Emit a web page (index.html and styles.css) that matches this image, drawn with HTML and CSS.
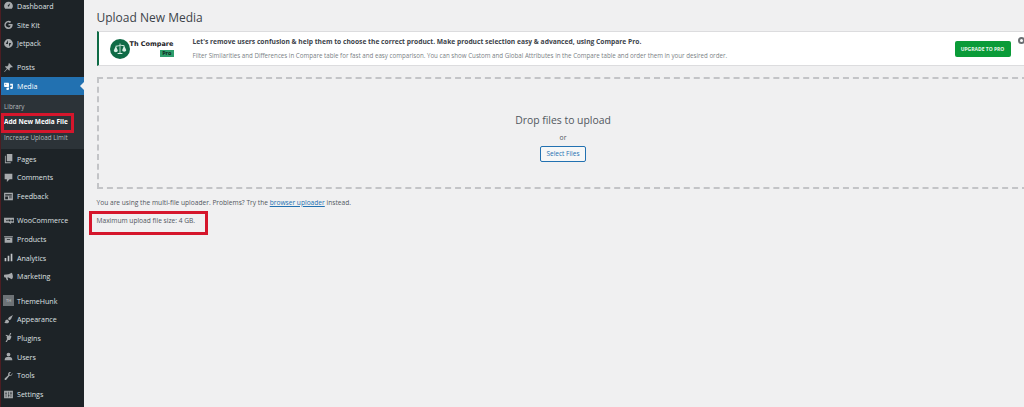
FILE: index.html
```html
<!DOCTYPE html>
<html lang="en">
<head>
<meta charset="utf-8">
<title>Upload New Media</title>
<link rel="stylesheet" href="styles.css">
</head>
<body>
<div class="app">
<nav class="sidebar">
  <div class="menu">
    <a class="item"><svg class="ico" viewBox="0 0 20 20"><path d="M10 3a8 8 0 0 0-8 8c0 2 .7 3.800 2 5h12a8 8 0 0 0 2-5 8 8 0 0 0-8-8zm0 9a1.500 1.500 0 0 1-1-2.600L13 6l-1.700 5A1.500 1.500 0 0 1 10 12z"/></svg>Dashboard</a>
    <a class="item"><svg class="ico" viewBox="0 0 20 20"><path d="M17 9h-7v3h4a4.500 4.500 0 1 1-1.300-4.700l2.200-2.200A7.500 7.500 0 1 0 17.500 10c0-.3 0-.7-.5-1z"/></svg>Site Kit</a>
    <a class="item"><svg class="ico" viewBox="0 0 20 20"><path d="M10 2a8 8 0 1 0 0 16 8 8 0 0 0 0-16zM9 11H5l4-7zm2 5V9h4z"/></svg>Jetpack</a>
    <a class="item sep"><svg class="ico" viewBox="0 0 20 20"><path d="M11 2l7 7-2 1-1-1-3 3c.5 1.500.3 3-.5 4L8 12.500 3 18l-1-.2L7 12 3.500 8.500c1-.8 2.500-1 4-.5l3-3-1-1z"/></svg>Posts</a>
    <a class="item current"><svg class="ico" viewBox="0 0 20 20"><path d="M2 3h8l1 2v5l-1 1H3L2 10zm3 2a1 1 0 1 0 0 2 1 1 0 0 0 0-2zM13 5h5v7.500a2.500 2 0 1 1-2-2V8h-3zM6 12h5v2.500a2.500 2 0 1 1-2-2z"/></svg>Media<i class="notch"></i></a>
    <div class="submenu">
      <a class="sub">Library</a>
      <a class="sub strong">Add New Media File</a>
      <a class="sub">Increase Upload Limit</a>
    </div>
    <a class="item"><svg class="ico" viewBox="0 0 20 20"><path d="M7 2h10v13H7zM5 5v12h9v1.500H3.500V5z"/></svg>Pages</a>
    <a class="item"><svg class="ico" viewBox="0 0 20 20"><path d="M3 3h14v10h-5l-5 5v-5H3z"/></svg>Comments</a>
    <a class="item"><svg class="ico" viewBox="0 0 20 20"><path fill-rule="evenodd" d="M2 3h16v14H2zm2 3v2h12V6zm0 4v5h5v-5zm7 0v1h5v-1zm0 2v1h5v-1z"/></svg>Feedback</a>
    <a class="item sep"><svg class="ico wide" viewBox="0 0 20 20"><path fill-rule="evenodd" d="M1 5h18v9h-6l1 3-4-3H1zm3 3l1 4 1.500-2.500L8 12l1-4H8l-.5 2L6.500 8l-1.500 2-.3-2zm7 0a2 2 0 1 0 0 4 2 2 0 0 0 0-4zm5 0a2 2 0 1 0 0 4 2 2 0 0 0 0-4z"/></svg>WooCommerce</a>
    <a class="item"><svg class="ico" viewBox="0 0 20 20"><path fill-rule="evenodd" d="M2 4h16v2H2zm1 3h14v9H3zm4 2v1.500h6V9z"/></svg>Products</a>
    <a class="item"><svg class="ico bright" viewBox="0 0 20 20"><path d="M3 11h3v6H3zM8.500 7h3v10h-3zM14 3h3v14h-3z"/></svg>Analytics</a>
    <a class="item"><svg class="ico" viewBox="0 0 20 20"><path d="M2 7l8-1 6-3c1 2 2 4.500 2 7s-1 4-2 5l-6-3H8l1.500 5H7l-2-5H3.500C2 12 1.500 9 2 7z"/></svg>Marketing</a>
    <a class="item sep"><span class="tile">TH</span>ThemeHunk</a>
    <a class="item"><svg class="ico" viewBox="0 0 20 20"><path d="M18 2l-7 4-2 3 2.500 2.500 3-2zM8 10l3 3c0 2.500-1.500 4-4 4-2 0-4.500-.5-5.500-1.500 2 0 2.500-1 2.500-2 0-2 1.500-3.500 4-3.500z"/></svg>Appearance</a>
    <a class="item"><svg class="ico" viewBox="0 0 20 20"><path d="M13 2h2l-2 5 2.500 1-2 5c-1 1.500-3 2-4.500 1.500L7 18H4.500l3-5.500C6.500 11 6.500 9 7.500 8L5 7V5l6 2z"/></svg>Plugins</a>
    <a class="item"><svg class="ico" viewBox="0 0 20 20"><path d="M10 3a3.500 3.500 0 1 1 0 7 3.500 3.500 0 0 1 0-7zM3 17c0-4 2-6 4.500-6h5c2.500 0 4.500 2 4.500 6z"/></svg>Users</a>
    <a class="item"><svg class="ico" viewBox="0 0 20 20"><path d="M17 5.500c.5 2-.2 4-2.500 5-1 .4-2 .3-2.800 0L6 17.500c-1 1-2 1-2.800.2S2.500 16 3.500 15l6-5.500c-.4-1-.3-2 0-3 1-2.300 3-3 5-2.500L11.500 7l1 2 2 .5z"/></svg>Tools</a>
    <a class="item"><svg class="ico" viewBox="0 0 20 20"><path fill-rule="evenodd" d="M2 3h16v14H2zm3 2v3H4v1h1v6h1V9h1V8H6V5zm5 0v6H9v1h1v3h1v-3h1v-1h-1V5zm4 0v2h-1v1h1v7h1V8h1V7h-1V5z"/></svg>Settings</a>
  </div>
</nav>
<main class="content">
  <h1 class="title">Upload New Media</h1>
  <section class="notice">
    <div class="brand">
      <svg class="logo" viewBox="0 0 20 20"><circle cx="10" cy="10" r="10" fill="#0f6b46"/><path d="M9.600 4.500h.8v1.200l4 .6v.8l1.800 4c0 1-1 1.600-2 1.600s-2-.6-2-1.600l1.600-3.900-3.400-.6V14h2v1H7.600v-1h2V7.100l-3.400.6 1.600 3.900c0 1-1 1.600-2 1.600s-2-.6-2-1.600l1.800-4v-.8l4-.6z" fill="#d9efe5"/></svg>
      <div class="brand-text">
        <span class="brand-name">Th Compare</span>
        <span class="brand-pro">Pro</span>
      </div>
    </div>
    <div class="notice-text">
      <p class="headline">Let's remove users confusion &amp; help them to choose the correct product. Make product selection easy &amp; advanced, using Compare Pro.</p>
      <p class="desc">Filter Similarities and Differences in Compare table for fast and easy comparison. You can show Custom and Global Attributes in the Compare table and order them in your desired order.</p>
    </div>
    <a class="upgrade">UPGRADE TO PRO</a>
    <i class="dismiss"></i>
  </section>
  <section class="dropzone">
    <p class="drop-title">Drop files to upload</p>
    <p class="drop-or">or</p>
    <button class="select">Select Files</button>
  </section>
  <p class="hint">You are using the multi-file uploader. Problems? Try the <a class="link">browser uploader</a> instead.</p>
  <p class="hint max">Maximum upload file size: 4 GB.</p>
</main>
</div>
<div class="mark mark-menu"></div>
<div class="mark mark-size"></div>
</body>
</html>
```
FILE: styles.css
```css
* { box-sizing: border-box; }
html, body { margin: 0; height: 100%; overflow: hidden; }
body { background: #f0f0f1; font-family: "Open Sans", "Noto Sans", sans-serif; color: #3c434a; position: relative; }
.app { display: flex; height: 407px; width: 1024px; overflow: hidden; }

.sidebar { width: 84px; flex: none; background: #1d2327; border-left: 1px solid #4c1d22; overflow: hidden; }
.menu { margin-top: -3.500px; display: flex; flex-direction: column; }
.item { position: relative; display: flex; align-items: center; height: 18.7px; font-size: 7.100px; color: #dfe1e3; padding-left: 2px; white-space: nowrap; flex: none; }
.sep { margin-top: 5.500px; }
.ico { width: 11px; height: 11px; fill: #a7aaad; margin-right: 3px; flex: none; }
.ico.wide { width: 12px; margin-right: 2px; }
.ico.bright { fill: #c3c6c9; }
.tile { width: 11px; height: 11px; margin-right: 3px; background: #6d7276; color: #d5d7d9; font-size: 4px; display: flex; align-items: center; justify-content: center; flex: none; }
.current { background: #2271b1; color: #fff; margin-left: -1px; padding-left: 3px; }
.current .ico { fill: #fff; }
.notch { position: absolute; right: 0; top: 5px; border: 4.500px solid transparent; border-left-width: 0; border-right-color: #f0f0f1; }
.submenu { background: #2c3338; display: flex; flex-direction: column; height: 54px; padding-top: 3px; margin-left: -1px; flex: none; }
.sub { font-size: 6.300px; height: 15.600px; display: flex; align-items: center; padding-left: 4px; color: #b4b9be; white-space: nowrap; }
.strong { color: #fff; font-weight: 700; font-size: 6.500px; }

.content { flex: 1; min-width: 0; padding-left: 12.500px; overflow: hidden; }
.title { margin: 0; height: 31px; padding-top: 8px; font-size: 12px; line-height: 19px; font-weight: 400; color: #3c434a; }
.notice { position: relative; display: flex; align-items: center; width: 940px; height: 35px; background: #fff; border: 1px solid #dcdcde; border-left: 2px solid #0f6b46; }
.brand { width: 94px; flex: none; display: flex; align-items: center; padding-left: 11px; }
.logo { width: 20px; height: 20px; flex: none; }
.brand-text { display: flex; flex-direction: column; align-items: flex-end; line-height: 9px; }
.brand-name { font-family: "DejaVu Sans", sans-serif; font-size: 6.500px; font-weight: 700; color: #1d2327; white-space: nowrap; }
.brand-pro { background: #2f9e6c; color: #10261c; font-size: 5.500px; font-weight: 700; line-height: 7px; padding: 0 2px; margin-top: 1px; }
.notice-text { width: 740px; flex: none; display: flex; flex-direction: column; gap: 4px; }
.notice-text p { margin: 0; white-space: nowrap; }
.headline { font-size: 6.700px; line-height: 10px; font-weight: 700; color: #3c434a; }
.desc { font-size: 6.200px; line-height: 10px; color: #7a7f85; }
.upgrade { position: absolute; left: 856px; top: 9px; width: 56px; height: 16px; background: #0a9b38; color: #e8f6ec; border-radius: 2px; font-size: 5px; font-weight: 700; display: flex; align-items: center; justify-content: center; white-space: nowrap; }
.dismiss { position: absolute; left: 919px; top: 5px; width: 7px; height: 7px; border-radius: 50%; border: 2px solid #6b6f73; }

.dropzone { width: 931px; height: 112px; margin-top: 11px; border: 2px dashed #c3c4c7; border-right: 0; display: flex; flex-direction: column; align-items: center; padding-top: 33px; }
.dropzone p { margin: 0; }
.drop-title { font-size: 10.400px; line-height: 16px; color: #50575e; }
.drop-or { font-size: 6.800px; line-height: 10px; margin-top: 5px !important; color: #50575e; }
.select { margin-top: 2.500px; width: 46px; height: 16px; padding: 0; background: #f6f7f7; border: 1px solid #2271b1; border-radius: 2px; color: #2271b1; font: 6.500px "Open Sans", sans-serif; }
.hint { margin: 9px 0 0; font-size: 6.640px; line-height: 10px; color: #50575e; white-space: nowrap; }
.max { margin-top: 8px; }
.link { color: #2271b1; text-decoration: underline; }

.mark { position: absolute; border: 3px solid #d5162c; }
.mark-menu { left: 1px; top: 113px; width: 73px; height: 20px; }
.mark-size { left: 89px; top: 211px; width: 119px; height: 24px; }
```
